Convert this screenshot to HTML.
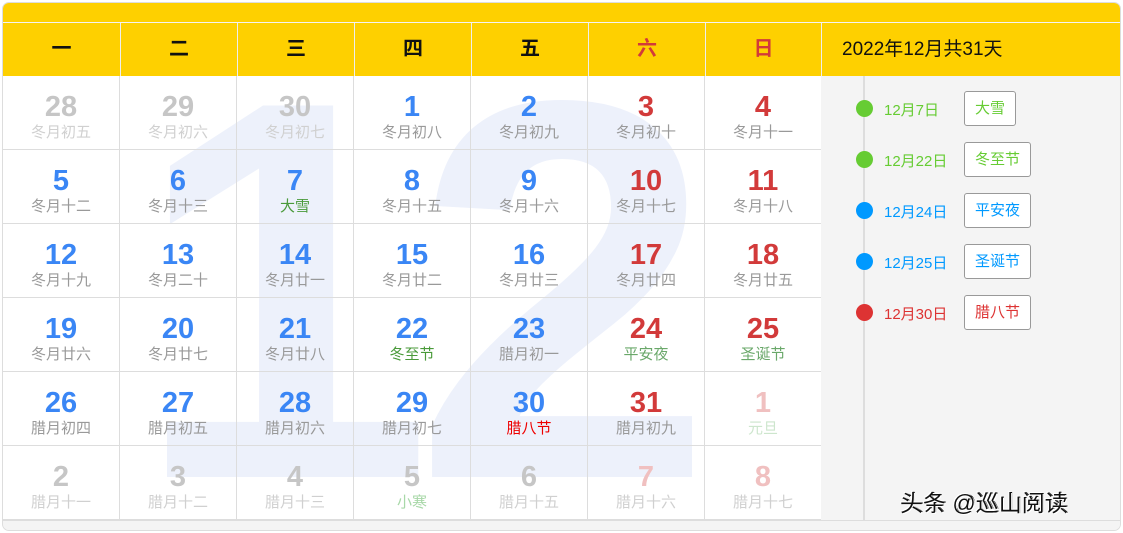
<!DOCTYPE html><html><head><meta charset="utf-8"><style>
*{margin:0;padding:0;box-sizing:border-box}
html,body{width:1123px;height:533px;overflow:hidden}
body{background:#fff;font-family:"Liberation Sans","Noto Sans CJK SC",sans-serif;position:relative}
.wrap{position:absolute;left:2px;top:2px;width:1119px;height:529px;border:1px solid #ddd;border-radius:7px;overflow:hidden;background:#f4f4f4}
.top{position:absolute;left:0;top:0;width:100%;height:19px;background:#fed000}
.hd{position:absolute;top:20px;height:53px;background:#fed000;text-align:center;line-height:53px;font-size:20px;font-weight:bold;color:#111;border-left:1px solid #eee}
.grid{position:absolute;left:0;top:73px;width:818px;height:444px;background:#fff;overflow:hidden}
.big{position:absolute;left:130px;top:-55px;font-size:540px;font-weight:bold;color:#edf1fb;line-height:540px;font-family:"Liberation Sans",sans-serif;letter-spacing:-20px}
.c{position:absolute;width:117px;height:74px;border-right:1px solid #ddd;border-bottom:1px solid #ddd;text-align:center}
.n{position:absolute;left:0;right:0;top:15px;font-size:29px;font-weight:bold;line-height:32px;font-family:"Liberation Sans",sans-serif}
.l{position:absolute;left:0;right:0;top:47px;font-size:15px;line-height:20px;color:#999}
.b{color:#3a86f5}.r{color:#d23a3a}.g{color:#c6c6c6}.pr{color:#f0c0c0}
.lf{color:#d0d0d0}.gr{color:#4a9a3a}.gf{color:#a8d8a8}.rd{color:#e00}
.side{position:absolute;left:818px;top:73px;width:301px;height:444px;background:#f4f4f4}
.line{position:absolute;left:42px;top:0;width:2px;height:444px;background:#ddd}
.it{position:absolute;left:35px;height:34px}
.dot{position:absolute;left:0;top:9px;width:17px;height:17px;border-radius:50%}
.dt{position:absolute;left:28px;top:8px;font-size:15px;white-space:nowrap}
.bx{position:absolute;left:108px;top:0;height:35px;border:1px solid #999;border-radius:3px;background:#fff;font-size:15px;line-height:33px;padding:0 10px;white-space:nowrap}
.bot{position:absolute;left:0;top:517px;width:100%;height:12px;background:#f4f4f4;border-top:1px solid #ddd}
.wm{position:absolute;left:900px;top:484px;font-size:23px;color:#111;text-shadow:1px 1px 0 #fff,-1px -1px 0 #fff,1px 0 0 #111}
</style></head><body><div class="wrap">
<div class="top"></div>
<div class="hd" style="left:0;width:117px;border-left:0">一</div>
<div class="hd" style="left:117px;width:117px">二</div>
<div class="hd" style="left:234px;width:117px">三</div>
<div class="hd" style="left:351px;width:117px">四</div>
<div class="hd" style="left:468px;width:117px">五</div>
<div class="hd" style="left:585px;width:117px;color:#d23a3a">六</div>
<div class="hd" style="left:702px;width:116px;color:#d23a3a">日</div>
<div class="hd" style="left:818px;width:301px;text-align:left;padding-left:20px;font-weight:normal;font-size:19px">2022年12月共31天</div>
<div class="grid"><div class="big">12</div>
<div class="c" style="left:0;top:0"><div class="n g">28</div><div class="l lf">冬月初五</div></div>
<div class="c" style="left:117px;top:0"><div class="n g">29</div><div class="l lf">冬月初六</div></div>
<div class="c" style="left:234px;top:0"><div class="n g">30</div><div class="l lf">冬月初七</div></div>
<div class="c" style="left:351px;top:0"><div class="n b">1</div><div class="l">冬月初八</div></div>
<div class="c" style="left:468px;top:0"><div class="n b">2</div><div class="l">冬月初九</div></div>
<div class="c" style="left:585px;top:0"><div class="n r">3</div><div class="l">冬月初十</div></div>
<div class="c" style="left:702px;top:0"><div class="n r">4</div><div class="l">冬月十一</div></div>
<div class="c" style="left:0;top:74px"><div class="n b">5</div><div class="l">冬月十二</div></div>
<div class="c" style="left:117px;top:74px"><div class="n b">6</div><div class="l">冬月十三</div></div>
<div class="c" style="left:234px;top:74px"><div class="n b">7</div><div class="l gr">大雪</div></div>
<div class="c" style="left:351px;top:74px"><div class="n b">8</div><div class="l">冬月十五</div></div>
<div class="c" style="left:468px;top:74px"><div class="n b">9</div><div class="l">冬月十六</div></div>
<div class="c" style="left:585px;top:74px"><div class="n r">10</div><div class="l">冬月十七</div></div>
<div class="c" style="left:702px;top:74px"><div class="n r">11</div><div class="l">冬月十八</div></div>
<div class="c" style="left:0;top:148px"><div class="n b">12</div><div class="l">冬月十九</div></div>
<div class="c" style="left:117px;top:148px"><div class="n b">13</div><div class="l">冬月二十</div></div>
<div class="c" style="left:234px;top:148px"><div class="n b">14</div><div class="l">冬月廿一</div></div>
<div class="c" style="left:351px;top:148px"><div class="n b">15</div><div class="l">冬月廿二</div></div>
<div class="c" style="left:468px;top:148px"><div class="n b">16</div><div class="l">冬月廿三</div></div>
<div class="c" style="left:585px;top:148px"><div class="n r">17</div><div class="l">冬月廿四</div></div>
<div class="c" style="left:702px;top:148px"><div class="n r">18</div><div class="l">冬月廿五</div></div>
<div class="c" style="left:0;top:222px"><div class="n b">19</div><div class="l">冬月廿六</div></div>
<div class="c" style="left:117px;top:222px"><div class="n b">20</div><div class="l">冬月廿七</div></div>
<div class="c" style="left:234px;top:222px"><div class="n b">21</div><div class="l">冬月廿八</div></div>
<div class="c" style="left:351px;top:222px"><div class="n b">22</div><div class="l gr">冬至节</div></div>
<div class="c" style="left:468px;top:222px"><div class="n b">23</div><div class="l">腊月初一</div></div>
<div class="c" style="left:585px;top:222px"><div class="n r">24</div><div class="l" style="color:#6aa86a">平安夜</div></div>
<div class="c" style="left:702px;top:222px"><div class="n r">25</div><div class="l" style="color:#6aa86a">圣诞节</div></div>
<div class="c" style="left:0;top:296px"><div class="n b">26</div><div class="l">腊月初四</div></div>
<div class="c" style="left:117px;top:296px"><div class="n b">27</div><div class="l">腊月初五</div></div>
<div class="c" style="left:234px;top:296px"><div class="n b">28</div><div class="l">腊月初六</div></div>
<div class="c" style="left:351px;top:296px"><div class="n b">29</div><div class="l">腊月初七</div></div>
<div class="c" style="left:468px;top:296px"><div class="n b">30</div><div class="l rd">腊八节</div></div>
<div class="c" style="left:585px;top:296px"><div class="n r">31</div><div class="l">腊月初九</div></div>
<div class="c" style="left:702px;top:296px"><div class="n pr">1</div><div class="l" style="color:#cde6cd">元旦</div></div>
<div class="c" style="left:0;top:370px"><div class="n g">2</div><div class="l lf">腊月十一</div></div>
<div class="c" style="left:117px;top:370px"><div class="n g">3</div><div class="l lf">腊月十二</div></div>
<div class="c" style="left:234px;top:370px"><div class="n g">4</div><div class="l lf">腊月十三</div></div>
<div class="c" style="left:351px;top:370px"><div class="n g">5</div><div class="l gf">小寒</div></div>
<div class="c" style="left:468px;top:370px"><div class="n g">6</div><div class="l lf">腊月十五</div></div>
<div class="c" style="left:585px;top:370px"><div class="n pr">7</div><div class="l lf">腊月十六</div></div>
<div class="c" style="left:702px;top:370px"><div class="n pr">8</div><div class="l lf">腊月十七</div></div>
</div>
<div class="side"><div class="line"></div>
<div class="it" style="top:15px"><div class="dot" style="background:#6c3"></div><div class="dt" style="color:#6c3">12月7日</div><div class="bx" style="color:#6c3">大雪</div></div>
<div class="it" style="top:66px"><div class="dot" style="background:#6c3"></div><div class="dt" style="color:#6c3">12月22日</div><div class="bx" style="color:#6c3">冬至节</div></div>
<div class="it" style="top:117px"><div class="dot" style="background:#09f"></div><div class="dt" style="color:#09f">12月24日</div><div class="bx" style="color:#09f">平安夜</div></div>
<div class="it" style="top:168px"><div class="dot" style="background:#09f"></div><div class="dt" style="color:#09f">12月25日</div><div class="bx" style="color:#09f">圣诞节</div></div>
<div class="it" style="top:219px"><div class="dot" style="background:#d33"></div><div class="dt" style="color:#d33">12月30日</div><div class="bx" style="color:#d33">腊八节</div></div>
</div>
<div class="bot"></div>
</div>
<div class="wm">头条 @巡山阅读</div>
</body></html>
